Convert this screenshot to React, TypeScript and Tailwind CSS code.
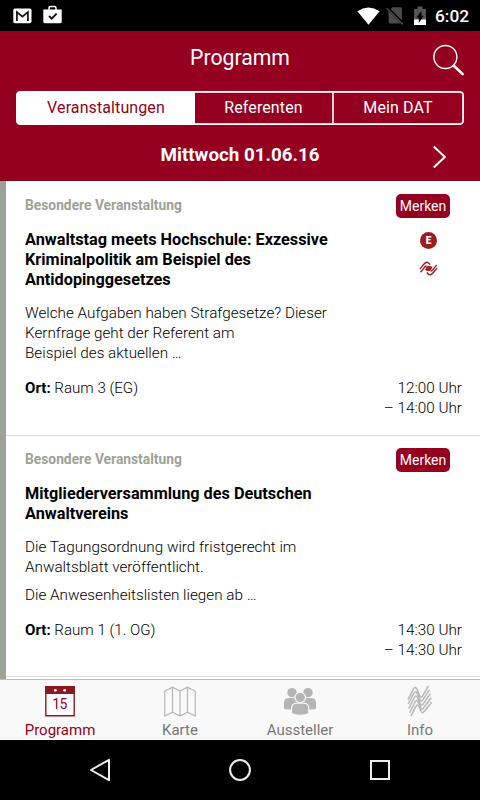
import { Fragment } from "react";
import type { ReactNode } from "react";
import clsx from "clsx";

type Talk = {
  category: string;
  title: string[];
  paragraphs: string[][];
  room: string;
  start: string;
  end: string;
  badges?: boolean;
};

const talks: Talk[] = [
  {
    category: "Besondere Veranstaltung",
    title: [
      "Anwaltstag meets Hochschule: Exzessive",
      "Kriminalpolitik am Beispiel des",
      "Antidopinggesetzes",
    ],
    paragraphs: [
      [
        "Welche Aufgaben haben Strafgesetze? Dieser",
        "Kernfrage geht der Referent am",
        "Beispiel des aktuellen …",
      ],
    ],
    room: "Raum 3 (EG)",
    start: "12:00 Uhr",
    end: "– 14:00 Uhr",
    badges: true,
  },
  {
    category: "Besondere Veranstaltung",
    title: ["Mitgliederversammlung des Deutschen", "Anwaltvereins"],
    paragraphs: [
      ["Die Tagungsordnung wird fristgerecht im", "Anwaltsblatt veröffentlicht."],
      ["Die Anwesenheitslisten liegen ab …"],
    ],
    room: "Raum 1 (1. OG)",
    start: "14:30 Uhr",
    end: "– 14:30 Uhr",
  },
];

function Lines({ lines }: { lines: string[] }) {
  return (
    <>
      {lines.map((line, i) => (
        <Fragment key={line}>
          {i > 0 && <br />}
          {line}
        </Fragment>
      ))}
    </>
  );
}

function StatusBar() {
  return (
    <div className="flex h-[31px] shrink-0 items-center bg-black text-white">
      {/* Mail */}
      <svg className="ml-[13px] h-4 w-[19px]" viewBox="0 0 19 16">
        <rect x="0.3" y="0.6" width="18.2" height="14.6" rx="1.6" fill="#fff" />
        <path d="M3.9 13V4.1L9.4 8.6l5.5-4.5V13" fill="none" stroke="#111" strokeWidth="1.7" />
      </svg>
      {/* Store update */}
      <svg className="mb-[3px] ml-[11px] h-[19px] w-[19px]" viewBox="0 0 19 19">
        <path d="M6 5V3.3Q6 1.4 7.8 1.4h3.4Q13 1.4 13 3.3V5" fill="none" stroke="#fff" strokeWidth="1.5" />
        <path d="M.3 4.5h18.4v12.3q0 1.5-1.5 1.5H1.8q-1.5 0-1.5-1.5Z" fill="#fff" />
        <path d="m6 11 2.7 2.6 4.9-5" fill="none" stroke="#111" strokeWidth="1.9" />
      </svg>
      {/* Wifi */}
      <svg className="ml-auto h-[18px] w-[23px]" viewBox="0 0 23 18">
        <path d="M.4 4.2Q11.5-3.2 22.6 4.2L11.5 17.8Z" fill="#fff" />
      </svg>
      {/* No SIM */}
      <svg className="ml-[6px] h-[19px] w-[19px]" viewBox="0 0 19 19">
        <path d="M6.5 1.3h8.1q1.4 0 1.4 1.4v13.4q0 1.4-1.4 1.4H4q-1.4 0-1.4-1.4V5.2Z" fill="#4a4a4a" />
        <path d="m1.5 2 16 16" stroke="#000" strokeWidth="3" />
        <path d="m.8 2.3 16 16" stroke="#4a4a4a" strokeWidth="1.4" />
      </svg>
      {/* Battery */}
      <svg className="ml-[9px] h-5 w-3" viewBox="0 0 12 20">
        <path d="M0 3h3.5V.5h5V3H12v16H0Z" fill="#555" />
        <path d="M0 13.5h12V19H0Z" fill="#fff" />
        <path d="M7.5 5v4.8h2.3L4.8 17v-5.4H2.3Z" fill="#000" />
      </svg>
      <span className="mr-[10px] ml-[9px] w-[35px] text-[17.3px] leading-5 font-medium">6:02</span>
    </div>
  );
}

function Header() {
  return (
    <header className="h-[150px] shrink-0 border-b border-[#7e001a] bg-[#960020] text-white">
      <div className="grid h-[60px] grid-cols-[1fr_auto_1fr] items-start">
        <h1 className="col-start-2 pt-[13px] text-[21.2px] leading-7">Programm</h1>
        <svg className="mt-[13px] mr-[15px] h-8 w-8 justify-self-end" viewBox="0 0 32 32" fill="none" stroke="#fff">
          <circle cx="12.4" cy="13" r="11.5" strokeWidth="1.4" />
          <path d="m20.8 21.8 8.9 8.3" strokeWidth="2.6" strokeLinecap="round" />
        </svg>
      </div>
      <div className="mx-4 flex h-[34px] overflow-hidden rounded-[4px] border border-white bg-white text-center text-[16px] tracking-[0.1px]">
        <span className="w-[178px] leading-[32px] text-[#960020]">Veranstaltungen</span>
        <span className="w-[139px] border-y border-r-2 border-[#f0d0d8] bg-[#960020] leading-[30px]">
          Referenten
        </span>
        <span className="flex-1 rounded-r-[3px] border-y border-r border-[#f0d0d8] bg-[#960020] leading-[30px]">
          Mein DAT
        </span>
      </div>
      <div className="grid h-[55px] grid-cols-[1fr_auto_1fr] items-start">
        <h2 className="col-start-2 pt-[16px] text-[18.8px] leading-7 font-bold">Mittwoch 01.06.16</h2>
        <svg className="mt-[20px] mr-[33px] h-6 w-[15px] justify-self-end" viewBox="0 0 15 24">
          <path d="m1.8 1.5 11 10.5-11 10.5" fill="none" stroke="#fff" strokeWidth="2" />
        </svg>
      </div>
    </header>
  );
}

function TalkCard({ talk }: { talk: Talk }) {
  return (
    <article className="border-b border-[#dcdcdc] pt-[13px] pr-[18px] pb-[17px] pl-[19px] text-[15.2px] leading-5 text-black last:pb-4">
      <div className="flex">
        <div className="flex-1 whitespace-nowrap">
          <p className="text-[13.8px] font-bold text-[#9da296]">{talk.category}</p>
          <h3 className="mt-[15px] text-[16.25px] font-bold">
            <Lines lines={talk.title} />
          </h3>
          <div className="mt-[13px] space-y-2 text-[15.25px] font-light">
            {talk.paragraphs.map((lines) => (
              <p key={lines[0]}>
                <Lines lines={lines} />
              </p>
            ))}
          </div>
        </div>
        <div className="-mt-px mr-3 flex w-[54px] flex-col items-center">
          <button className="h-6 w-full rounded-[5px] bg-[#960020] text-[14px] leading-[23px] text-white">
            Merken
          </button>
          {talk.badges && (
            <>
              <span className="mt-[14px] ml-[11px] flex size-[17px] items-center justify-center rounded-full bg-[#9c1c20] text-[10px] font-black text-white">
                E
              </span>
              <svg className="mt-[12px] ml-[11px] h-[15px] w-[19px]" viewBox="0 0 19 15" fill="none" stroke="#9c2024" strokeWidth="1.4">
                <path d="M.8 7.8C3 6.5 5 1.3 7.8 1.2c1.8 0 2.3 1.6 3.4 2.4" />
                <path d="M1.4 11.2C4 9.5 4.8 5.4 7.6 4.8M11.6 10.2c2.8-.6 3.8-4.4 6.2-6.2" />
                <path d="M7.8 11.4c1 1 1.6 2.5 3.4 2.4 2.8-.1 4.6-5.3 7-6.6" />
                <path d="M6 9.4c.8-2.6 2-4.6 3.8-4.6 1.6 0 2.4 1 3.8.8-.8 2.6-2 4.6-3.8 4.6-1.6 0-2.4-1-3.8-.8Z" fill="#9c2024" stroke="none" />
              </svg>
            </>
          )}
        </div>
      </div>
      <div className="mt-[15px] flex justify-between font-light">
        <p className="text-[15.1px]">
          <b className="font-bold">Ort:</b> {talk.room}
        </p>
        <p className="text-right text-[15.3px]">
          {talk.start}
          <br />
          {talk.end}
        </p>
      </div>
    </article>
  );
}

function TabItem({ label, active, children }: { label: string; active?: boolean; children: ReactNode }) {
  return (
    <div className={clsx("flex flex-1 flex-col items-center pt-[5px]", active ? "text-[#960020]" : "text-[#777]")}>
      <div className="flex h-8 items-center">{children}</div>
      <span className="mt-[3px] text-[15px] leading-5">{label}</span>
    </div>
  );
}

function TabBar() {
  return (
    <nav className="flex h-[61px] shrink-0 border-t border-[#bebebe] bg-[#f9f9f9]">
      <TabItem label="Programm" active>
        <svg className="h-[31px] w-[30px]" viewBox="0 0 30 31">
          <path d="M.8.8h28.4v28.9H.8Z" fill="#fff" stroke="#8c1820" strokeWidth="1.4" />
          <path d="M0 0h30v8H0Z" fill="#8c1820" />
          <circle cx="10.4" cy="4.3" r="1.4" fill="#fff" />
          <circle cx="19.6" cy="4.3" r="1.4" fill="#fff" />
          <text x="14.5" y="22.8" textAnchor="middle" fontSize="14" letterSpacing="-0.7" fill="#960020">15</text>
        </svg>
      </TabItem>
      <TabItem label="Karte">
        <svg className="h-[31px] w-8" viewBox="0 0 32 31" fill="none" stroke="#b6b6b6" strokeWidth="1.2">
          <path d="m.8 5 7.7-3.9L16 5l7.5-3.9L31.2 5v25l-7.7-3.9L16 30l-7.5-3.9L.8 30ZM8.5 1.1v25M16 5v25M23.5 1.1v25" />
        </svg>
      </TabItem>
      <TabItem label="Aussteller">
        <svg className="h-[29px] w-8" viewBox="0 0 32 29" fill="#b5b5b5">
          <circle cx="8" cy="5.6" r="4.7" />
          <circle cx="24" cy="5.6" r="4.7" />
          <path d="M0 22V16q0-5 5-5h6q4 0 4 5v6q-7 1-15 0ZM32 22V16q0-5-5-5h-6q-4 0-4 5v6q7 1 15 0Z" />
          <circle cx="16.2" cy="10.5" r="5.2" stroke="#f9f9f9" strokeWidth="1.1" />
          <path d="M7.6 26.5V21.5q0-5.3 5.3-5.3h6.6q5.3 0 5.3 5.3v5q-3 1.8-8.6 1.8t-8.6-1.8Z" stroke="#f9f9f9" strokeWidth="1.1" />
        </svg>
      </TabItem>
      <TabItem label="Info">
        <svg className="h-8 w-7" viewBox="0 0 28 32" fill="none" stroke="#b6b6b6" strokeWidth="1.5">
          <path d="M2 14.6 7.4 4Q9.2.8 10.8 4l3 7q1.3 2.4 2.8 0L22.4.8" />
          <path d="M2.2 19 7.8 8.2q1.8-3 3.3 0l3 6.7q1.3 2.4 2.8 0L23.4 4.8" />
          <path d="m2.8 23.4 5.5-10.8q1.7-3 3.2 0l3 6.3q1.3 2.4 2.8 0L24.5 8.8" />
          <path d="M3.8 27.6 9 17q1.6-3 3.1 0l2.8 5.8q1.3 2.4 2.8 0l7.6-10" />
          <path d="m5 31.2 4.8-9.8q1.5-3 3 0l2.4 5q1.4 2.6 3 0l7.6-9.2" />
        </svg>
      </TabItem>
    </nav>
  );
}

function SystemNav() {
  return (
    <div className="flex h-[60px] shrink-0 items-center justify-center gap-[117px] bg-black">
      <svg className="h-6 w-[22px]" viewBox="0 0 22 24">
        <path d="M2 12 20 1.8v20.4Z" fill="none" stroke="#eee" strokeWidth="2" strokeLinejoin="round" />
      </svg>
      <svg className="h-6 w-6" viewBox="0 0 24 24">
        <circle cx="12" cy="12" r="9.9" fill="none" stroke="#eee" strokeWidth="2" />
      </svg>
      <svg className="h-6 w-[22px]" viewBox="0 0 22 24">
        <rect x="2" y="3" width="18" height="18" fill="none" stroke="#eee" strokeWidth="2" />
      </svg>
    </div>
  );
}

export default function App() {
  return (
    <div className="flex h-[800px] w-[480px] flex-col overflow-hidden bg-white font-['Roboto',sans-serif]">
      <StatusBar />
      <Header />
      <main className="h-[498px] shrink-0 overflow-hidden border-l-[6px] border-[#9da296] pt-px">
        {talks.map((talk) => (
          <TalkCard key={talk.title[0]} talk={talk} />
        ))}
      </main>
      <TabBar />
      <SystemNav />
    </div>
  );
}
